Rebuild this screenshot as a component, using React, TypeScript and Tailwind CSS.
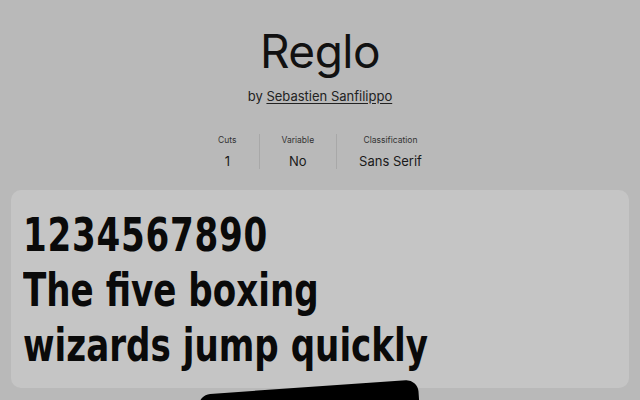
export default function App() {
  const stats = [
    { label: 'Cuts', value: '1' },
    { label: 'Variable', value: 'No' },
    { label: 'Classification', value: 'Sans Serif' },
  ]

  return (
    <div className="relative w-[640px] h-[400px] overflow-hidden bg-[#b9b9b9] text-[#111] font-['Inter','Liberation_Sans',sans-serif]">
      <div className="flex flex-col items-center pt-[23px]">
        <h1 className="text-[46px] leading-[56px] tracking-[-0.5px]">Reglo</h1>
        <p className="mt-[9px] text-[13px] leading-[16px] text-[#222]">
          by <span className="underline underline-offset-2">Sebastien Sanfilippo</span>
        </p>

        <div className="flex mt-[30px]">
          {stats.map((s, i) => (
            <div
              key={s.label}
              className={`flex flex-col items-center px-[22px] ${i > 0 ? 'border-l border-[#a8a8a8]' : ''}`}
            >
              <span className="text-[8.5px] leading-[12px] text-[#333]">{s.label}</span>
              <span className="mt-[7px] text-[13px] leading-[16px] text-[#1a1a1a]">{s.value}</span>
            </div>
          ))}
        </div>
      </div>

      <div className="mx-[11px] mt-[21px] h-[198px] rounded-[10px] bg-[#c5c5c5] px-[12px] pt-[18px]">
        <div className="origin-left [transform:scaleX(0.7425)] font-['DejaVu_Sans',sans-serif] font-bold text-[46px] leading-[55px] text-[#0a0a0a] whitespace-nowrap">
          <div className="tracking-[1px]">1234567890</div>
          <div>The five boxing</div>
          <div>wizards jump quickly</div>
        </div>
      </div>

      <div className="absolute left-[200px] top-[387px] w-[220px] h-[60px] rounded-[12px] bg-black -rotate-[4deg]" />
    </div>
  )
}
